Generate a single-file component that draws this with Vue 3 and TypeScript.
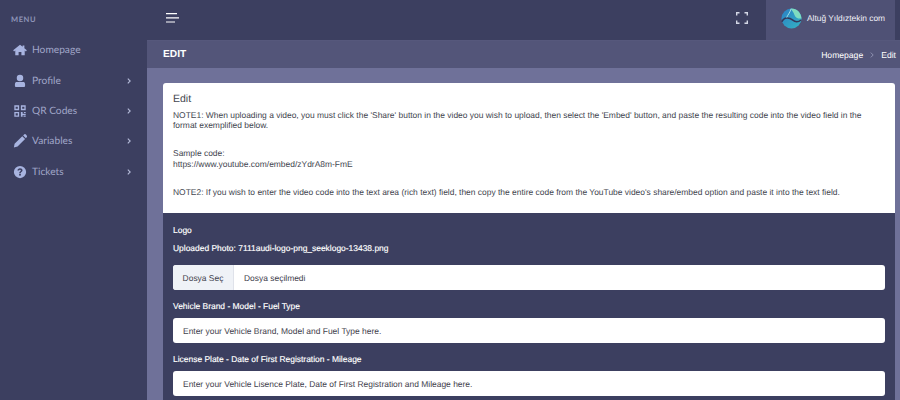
<script setup lang="ts">
const items = [
  { label: 'Homepage', icon: 'home', arrow: false },
  { label: 'Profile', icon: 'user', arrow: true },
  { label: 'QR Codes', icon: 'qr', arrow: true },
  { label: 'Variables', icon: 'pen', arrow: true },
  { label: 'Tickets', icon: 'help', arrow: true },
]
</script>

<template>
  <div class="page">
    <aside class="sidebar">
      <div class="menu-title">MENU</div>
      <div v-for="item in items" :key="item.label" class="nav-item">
        <svg class="nav-icon" viewBox="0 0 16 16">
          <path v-if="item.icon === 'home'" d="M8 2 L0.2 8.4 L1.2 9.6 L2.6 8.5 V14 H6.4 V10.2 H9.6 V14 H13.4 V8.5 L14.8 9.6 L15.8 8.4 L13 6.1 V2.8 H11 V4.4 Z" />
          <path v-else-if="item.icon === 'user'" d="M8 0.8 A3.7 3.7 0 1 1 8 8.2 A3.7 3.7 0 1 1 8 0.8 Z M3.6 9.2 H12.4 A2.6 2.6 0 0 1 13.8 11.4 V13.6 A1.2 1.2 0 0 1 12.6 14.8 H3.4 A1.2 1.2 0 0 1 2.2 13.6 V11.4 A2.6 2.6 0 0 1 3.6 9.2 Z" />
          <path v-else-if="item.icon === 'qr'" fill-rule="evenodd" d="M1.5 1.5 H7 V7 H1.5 Z M3 3 V5.5 H5.5 V3 Z M9 1.5 H14.5 V7 H9 Z M10.5 3 V5.5 H13 V3 Z M1.5 9 H7 V14.5 H1.5 Z M3 10.5 V13 H5.5 V10.5 Z M9 9 H11 V11 H14.5 V12.5 H11 V14.5 H9 Z M12 13 H14.5 V14.5 H12 Z M12.5 9 H14.5 V10.2 H12.5 Z" />
          <path v-else-if="item.icon === 'pen'" d="M10.6 2.6 L13.8 5.8 L5.2 14.4 L1 15.4 L1.8 11.2 Z M11.6 1.6 L12.6 0.7 A1.5 1.5 0 0 1 14.8 0.7 L15.6 1.6 A1.5 1.5 0 0 1 15.6 3.7 L14.8 4.8 Z" />
          <path v-else fill-rule="evenodd" d="M8 1 A7 7 0 1 1 8 15 A7 7 0 1 1 8 1 Z M8 3.8 C6.3 3.8 5.2 4.9 5.1 6.3 H6.9 C7 5.7 7.4 5.4 8 5.4 C8.6 5.4 9 5.7 9 6.2 C9 6.7 8.6 6.9 8.1 7.3 C7.4 7.8 7.1 8.3 7.1 9.3 H8.9 C8.9 8.7 9.1 8.5 9.6 8.1 C10.3 7.6 10.9 7.1 10.9 6.1 C10.9 4.8 9.7 3.8 8 3.8 Z M8 10 A1.1 1.1 0 1 0 8 12.2 A1.1 1.1 0 1 0 8 10 Z" />
        </svg>
        <span class="nav-label">{{ item.label }}</span>
        <svg v-if="item.arrow" class="nav-arrow" viewBox="0 0 4 6"><path d="M0.8 0.6 L3.2 3 L0.8 5.4" /></svg>
      </div>
    </aside>
    <div class="main">
      <header class="topbar">
        <svg class="burger" viewBox="0 0 13 10"><path d="M0 0.6 H11 M0 4.8 H13 M0 9 H9" /></svg>
        <div class="spacer"></div>
        <svg class="expand" viewBox="0 0 12 12"><path d="M0.7 3.5 V0.7 H3.5 M8.5 0.7 H11.3 V3.5 M11.3 8.5 V11.3 H8.5 M3.5 11.3 H0.7 V8.5" /></svg>
        <div class="user">
          <svg class="logo" viewBox="0 0 22 22">
            <defs>
              <linearGradient id="lg" x1="0" y1="0" x2="1" y2="1">
                <stop offset="0" stop-color="#2a7fc4" />
                <stop offset="1" stop-color="#35b4c4" />
              </linearGradient>
            </defs>
            <circle cx="11" cy="11" r="10.5" fill="url(#lg)" />
            <path d="M10 0.6 C16 0 21 4.5 21.5 11 C18 11.5 15 10 14 7 C13.3 5 11.5 2.5 10 0.6 Z" fill="#7fdcc0" />
            <path d="M1 14.5 C3 9 9 10 12 12.5 C15 15 18 15 21 12.6" fill="none" stroke="#34375a" stroke-width="1.6" />
            <path d="M6 10 C7 7 9 6 10.5 1" fill="none" stroke="#a8e0ea" stroke-width="1" />
          </svg>
          <span>Altuğ Yıldıztekin com</span>
        </div>
      </header>
      <div class="titlebar">
        <span class="title">EDIT</span>
        <div class="crumbs">
          <span>Homepage</span>
          <svg class="crumb-arrow" viewBox="0 0 4 6"><path d="M0.8 0.6 L3.2 3 L0.8 5.4" /></svg>
          <span>Edit</span>
        </div>
      </div>
      <div class="content">
        <section class="card">
          <div class="notes">
            <h4>Edit</h4>
            <p>NOTE1: When uploading a video, you must click the 'Share' button in the video you wish to upload, then select the 'Embed' button, and paste the resulting code into the video field in the format exemplified below.</p>
            <p class="gap">Sample code:<br />https://www.youtube.com/embed/zYdrA8m-FmE</p>
            <p class="gap">NOTE2: If you wish to enter the video code into the text area (rich text) field, then copy the entire code from the YouTube video's share/embed option and paste it into the text field.</p>
          </div>
          <div class="form">
            <div class="label first">Logo</div>
            <div class="label uploaded">Uploaded Photo: 7111audi-logo-png_seeklogo-13438.png</div>
            <div class="file">
              <span class="file-btn">Dosya Seç</span>
              <span class="file-text">Dosya seçilmedi</span>
            </div>
            <div class="label">Vehicle Brand - Model - Fuel Type</div>
            <div class="input">Enter your Vehicle Brand, Model and Fuel Type here.</div>
            <div class="label">License Plate - Date of First Registration - Mileage</div>
            <div class="input">Enter your Vehicle Lisence Plate, Date of First Registration and Mileage here.</div>
          </div>
        </section>
      </div>
    </div>
  </div>
</template>

<style>
html, body { margin: 0; overflow: hidden; }
</style>

<style scoped>
.page {
  display: flex;
  width: 900px;
  height: 400px;
  overflow: hidden;
  background: #6f7199;
  font-family: "Liberation Sans", Arial, sans-serif;
  text-rendering: geometricPrecision;
}
.sidebar {
  width: 147px;
  flex: none;
  background: #3c3f60;
  font-family: "Lato", sans-serif;
}
.menu-title {
  padding: 15px 0 0 11px;
  height: 35px;
  box-sizing: border-box;
  font-size: 7.5px;
  line-height: 10px;
  font-weight: 700;
  letter-spacing: 0.6px;
  color: #8f95b8;
}
.nav-item {
  display: flex;
  align-items: center;
  height: 30.4px;
  padding-left: 13px;
  color: #a0a6c8;
}
.nav-icon {
  width: 14px;
  height: 14px;
  fill: #a8b4e0;
  flex: none;
}
.nav-label {
  margin-left: 5px;
  font-size: 10.2px;
}
.nav-arrow {
  margin-left: auto;
  margin-right: 16px;
  width: 4px;
  height: 6px;
  fill: none;
  stroke: #b4bad8;
  stroke-width: 1.1;
}
.main {
  flex: 1;
  min-width: 0;
  display: flex;
  flex-direction: column;
}
.topbar {
  height: 41px;
  flex: none;
  display: flex;
  align-items: center;
  background: #3c3f60;
  border-bottom: 1px solid #56587c;
  box-sizing: border-box;
}
.burger {
  width: 13px;
  height: 10px;
  margin-left: 19px;
  margin-top: -4px;
  fill: none;
  stroke: #ffffff;
  stroke-width: 1.2;
}
.spacer { flex: 1; }
.expand {
  width: 12px;
  height: 12px;
  margin-right: 18px;
  margin-top: -4px;
  fill: none;
  stroke: #d4d7e6;
  stroke-width: 1.4;
}
.user {
  width: 129px;
  height: 100%;
  display: flex;
  align-items: center;
  padding: 0 0 4px 15px;
  box-sizing: border-box;
  background: #4f5175;
  color: #f1f2f8;
  font-size: 8.4px;
  margin-right: 5px;
}
.logo {
  width: 21px;
  height: 21px;
  margin-right: 5px;
  flex: none;
}
.user span { white-space: nowrap; }
.titlebar {
  height: 27px;
  flex: none;
  display: flex;
  align-items: center;
  justify-content: space-between;
  padding: 0 4px 0 16px;
  background: #535579;
  color: #ffffff;
}
.title {
  font-size: 10.2px;
  font-weight: 700;
}
.crumbs {
  display: flex;
  align-items: center;
  font-size: 8.6px;
}
.crumb-arrow {
  width: 4px;
  height: 6px;
  margin: 0 7px;
  fill: none;
  stroke: #8e91b0;
  stroke-width: 1;
}
.content {
  flex: 1;
  padding: 15px 5px 0 16px;
  min-height: 0;
}
.card {
  background: #ffffff;
  border-radius: 3px 3px 0 0;
  overflow: hidden;
}
.notes {
  padding: 10px 10px 0 10px;
  height: 130px;
  box-sizing: border-box;
  color: #43464f;
  font-size: 8.45px;
  line-height: 10.6px;
}
.notes h4 {
  margin: 0 0 3.5px;
  font-weight: 400;
  font-size: 10.5px;
  line-height: 13px;
}
.notes p { margin: 0; }
.notes p.gap { margin-top: 17.5px; }
.form {
  background: #3c3f60;
  padding: 11.5px 10px 0 10px;
  color: #ffffff;
  height: 200px;
  font-size: 8.45px;
}
.label {
  line-height: 11px;
  font-weight: 400;
  -webkit-text-stroke: 0.15px #fff;
  margin-top: 10.5px;
  margin-bottom: 6.5px;
}
.label.first { margin-top: 0; margin-bottom: 7px; }
.label.uploaded { margin-top: 0; margin-bottom: 11.5px; }
.file, .input {
  background: #ffffff;
  border-radius: 3px;
  height: 25px;
  color: #3f424d;
  display: flex;
  align-items: center;
  overflow: hidden;
}
.file-btn {
  background: #eff2f7;
  width: 61px;
  height: 100%;
  display: flex;
  align-items: center;
  justify-content: center;
  border-right: 1px solid #dfe2ea;
  box-sizing: border-box;
}
.file-text { margin-left: 10px; }
.input { padding-left: 10px; }
</style>
